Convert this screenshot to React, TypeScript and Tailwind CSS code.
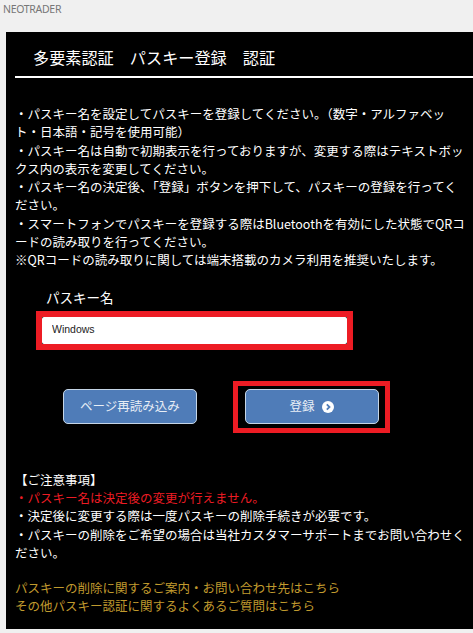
import React from 'react';

const font = { fontFamily: '"Noto Sans CJK JP", "Liberation Sans", sans-serif' };

const dots = 'bg-[#4f7cb8] bg-[radial-gradient(#7fa3cf_0.6px,transparent_0.7px)] bg-[length:6px_6px]';

const App: React.FC = () => {
  return (
    <div className="h-[633px] w-[473px] overflow-hidden bg-[#f0f0f0]" style={font}>
      {/* window title */}
      <div className="h-[32px] pl-[3px] pt-[1px] text-[10.5px] leading-[16px] tracking-[-0.3px] text-[#777777] font-['Noto_Sans',sans-serif]">NEOTRADER</div>

      <div className="h-[597px] ml-[6px] bg-black text-white overflow-hidden">
        <div className="ml-[9px] h-[46px] border-b-2 border-white pl-[18px] pt-[13px] text-[16.15px] leading-[24px] whitespace-pre">
          多要素認証　パスキー登録　認証
        </div>

        {/* description */}
        <div className="ml-[9px] mr-[4px] mt-[27px] text-[12.5px] leading-[18.3px]">
          <div>・パスキー名を設定してパスキーを登録してください。（数字・アルファベット・日本語・記号を使用可能）</div>
          <div>・パスキー名は自動で初期表示を行っておりますが、変更する際はテキストボックス内の表示を変更してください。</div>
          <div>・パスキー名の決定後、「登録」ボタンを押下して、パスキーの登録を行ってください。</div>
          <div>・スマートフォンでパスキーを登録する際はBluetoothを有効にした状態でQRコードの読み取りを行ってください。</div>
          <div>※QRコードの読み取りに関しては端末搭載のカメラ利用を推奨いたします。</div>
        </div>

        {/* passkey name */}
        <div className="ml-[40px] mt-[17px] text-[13.5px] leading-[20px]">パスキー名</div>
        <div className="ml-[30px] mt-[4px] h-[39px] w-[317px] border-[6px] border-[#ed1c24]">
          <input
            readOnly
            value="Windows"
            className="block h-full w-full rounded-[2px] bg-white pb-[2px] pl-[10px] text-[10.5px] text-[#222222] outline-none font-['Liberation_Sans',sans-serif]"
          />
        </div>

        {/* buttons */}
        <div className="mt-[31px] flex items-center">
          <button className={`ml-[57px] h-[35px] w-[134px] rounded-[5px] border border-[#c5d5e6] ${dots} text-[12.5px] text-[#e8eef6]`}>
            ページ再読み込み
          </button>
          <div className="ml-[36px] flex h-[52px] w-[157px] items-center justify-center border-[5px] border-[#ed1c24]">
            <button className={`flex h-[35px] w-[134px] items-center justify-center gap-[7px] rounded-[5px] border border-[#c5d5e6] ${dots} text-[12.5px] text-[#e8eef6]`}>
              登録
              <svg viewBox="0 0 12 12" className="h-[12px] w-[12px]">
                <circle cx="6" cy="6" r="6" fill="#ffffff" />
                <path d="M4.8 3.3 7.5 6 4.8 8.7" fill="none" stroke="#4f7cb8" strokeWidth="1.8" />
              </svg>
            </button>
          </div>
        </div>

        {/* notes */}
        <div className="ml-[9px] mr-[4px] mt-[38px] text-[12.5px] leading-[18.3px]">
          <div>【ご注意事項】</div>
          <div className="text-[#ed1c24]">・パスキー名は決定後の変更が行えません。</div>
          <div>・決定後に変更する際は一度パスキーの削除手続きが必要です。</div>
          <div>・パスキーの削除をご希望の場合は当社カスタマーサポートまでお問い合わせください。</div>
        </div>

        <div className="ml-[9px] mt-[17px] text-[12.5px] leading-[18.3px] text-[#c09a2e]">
          <div>パスキーの削除に関するご案内・お問い合わせ先はこちら</div>
          <div>その他パスキー認証に関するよくあるご質問はこちら</div>
        </div>
      </div>
    </div>
  );
};

export default App;
